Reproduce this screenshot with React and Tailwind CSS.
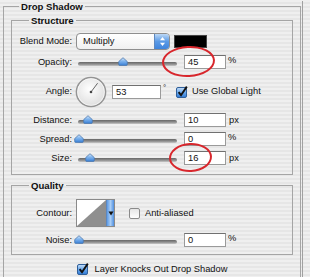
import React from "react";

function Label({ children }) {
  return <div className="w-[60px] shrink-0 text-right">{children}</div>;
}

function Field({ value, w = "w-[42px]" }) {
  return (
    <div className={`h-[14px] ${w} shrink-0 border border-[#9a9a9a] border-t-[#707070] bg-white pl-[3px] leading-[12px]`}>
      {value}
    </div>
  );
}

function Thumb() {
  return (
    <svg width="10" height="9" viewBox="0 0 10 9">
      <defs>
        <linearGradient id="thumbg" x1="0" y1="0" x2="0" y2="1">
          <stop offset="0" stopColor="#d6e8fb" />
          <stop offset="0.45" stopColor="#7fb4ee" />
          <stop offset="1" stopColor="#3a80d6" />
        </linearGradient>
      </defs>
      <path d="M0.7 4.6 L5 0.7 L9.3 4.6 L9.3 7.6 Q9.3 8.4 8.5 8.4 L1.5 8.4 Q0.7 8.4 0.7 7.6 Z" fill="url(#thumbg)" stroke="#4d79ae" strokeWidth="0.8" />
    </svg>
  );
}

function Slider({ pos }) {
  return (
    <div className="relative ml-[3px] h-[14px] w-[103px] shrink-0">
      <div className="ml-[3px] mt-[7px] h-[4px] w-[99px] rounded-full bg-[linear-gradient(#666666,#8f8f8f_55%,#c8c8c8)]" />
      <div className="absolute top-[2px]" style={{ left: pos - 5 }}>
        <Thumb />
      </div>
    </div>
  );
}

function CheckOn() {
  return (
    <svg width="12" height="12" viewBox="0 0 12 12" className="shrink-0 overflow-visible">
      <defs>
        <linearGradient id="cbg" x1="0" y1="0" x2="0" y2="1">
          <stop offset="0" stopColor="#c9e0f8" />
          <stop offset="0.5" stopColor="#68a7ec" />
          <stop offset="1" stopColor="#2f79d4" />
        </linearGradient>
      </defs>
      <rect x="0.5" y="1.5" width="10" height="10" rx="1.5" fill="url(#cbg)" stroke="#2f5f9a" />
      <path d="M2.6 6.2 L5 9.2 L10.8 0.6" fill="none" stroke="#111" strokeWidth="1.9" />
    </svg>
  );
}

function CheckOff() {
  return (
    <svg width="11" height="11" viewBox="0 0 11 11" className="shrink-0">
      <defs>
        <linearGradient id="cbo" x1="0" y1="0" x2="0" y2="1">
          <stop offset="0" stopColor="#e4e4e4" />
          <stop offset="1" stopColor="#ffffff" />
        </linearGradient>
      </defs>
      <rect x="0.5" y="0.5" width="10" height="10" rx="1.5" fill="url(#cbo)" stroke="#8a8a8a" />
    </svg>
  );
}

function Dial() {
  return (
    <svg width="32" height="32" viewBox="0 0 32 32" className="shrink-0">
      <defs>
        <radialGradient id="dialg" cx="0.45" cy="0.4" r="0.6">
          <stop offset="0" stopColor="#ffffff" />
          <stop offset="1" stopColor="#dedede" />
        </radialGradient>
      </defs>
      <circle cx="16" cy="16" r="14.6" fill="url(#dialg)" stroke="#949494" strokeWidth="1.5" />
      <circle cx="16" cy="16" r="13.4" fill="none" stroke="#ffffff" strokeWidth="0.6" />
      <line x1="16" y1="16" x2="22.6" y2="7.2" stroke="#555" strokeWidth="0.9" />
      <circle cx="16" cy="16" r="1.3" fill="#444" />
    </svg>
  );
}

function Dropdown() {
  return (
    <div className="ml-[4px] flex h-[17px] w-[94px] shrink-0 overflow-hidden rounded-[4px] border border-[#8e8e8e] bg-[linear-gradient(#ffffff,#f0f0f0)]">
      <div className="flex-1 pl-[6px] leading-[15px]">Multiply</div>
      <div className="flex w-[15px] items-center justify-center border-l border-[#5d88c0] bg-[linear-gradient(#bcd8f6,#5a9ae6_50%,#3f84dc)]">
        <svg width="7" height="11" viewBox="0 0 7 11">
          <path d="M3.5 1 L6 4.2 L1 4.2 Z" fill="#fff" />
          <path d="M3.5 10 L6 6.8 L1 6.8 Z" fill="#fff" />
        </svg>
      </div>
    </div>
  );
}

function Contour() {
  return (
    <div className="ml-[4px] flex h-[28px] shrink-0 border border-[#8a8a8a]">
      <svg width="29" height="26" viewBox="0 0 29 26">
        <rect width="29" height="26" fill="#fff" />
        <polygon points="0,26 29,0 29,26" fill="#8f8f8f" />
      </svg>
      <div className="flex w-[8px] items-center justify-center border-l border-[#5d88c0] bg-[linear-gradient(90deg,#5d9be6,#a9cdf5,#4f8fe0)]">
        <svg width="6" height="5" viewBox="0 0 6 5">
          <path d="M0.5 0.5 L5.5 0.5 L3 4.5 Z" fill="#111" />
        </svg>
      </div>
    </div>
  );
}

export default function App() {
  return (
    <div className="relative flex h-[277px] w-[310px] overflow-hidden bg-[image:repeating-linear-gradient(180deg,#efefef_0px,#efefef_2px,#e6e6e6_2px,#e6e6e6_4px)] pt-[1px] font-['Liberation_Sans',Arial,sans-serif] text-[9.3px] leading-[11px] text-[#111]">
      <fieldset className="ml-[3px] w-[298px] shrink-0 border border-b-0 border-[#a5a5a5]">
        <legend className="ml-[15px] px-[2px] text-[9.6px] font-bold leading-[11px]">Drop Shadow</legend>

        <fieldset className="mx-[7px] mt-[3px] border border-[#a5a5a5] pb-[9px]">
          <legend className="ml-[17px] px-[2px] text-[9.6px] font-bold leading-[11px]">Structure</legend>

          <div className="mt-[6px] flex h-[18px] items-center">
            <Label>Blend Mode:</Label>
            <Dropdown />
            <div className="ml-[4px] h-[13px] w-[33px] shrink-0 border border-[#444] bg-black" />
          </div>

          <div className="mt-[5px] flex h-[14px] items-center">
            <Label>Opacity:</Label>
            <Slider pos={48} />
            <div className="ml-[6px]"><Field value="45" /></div>
            <span className="ml-[2px] self-start">%</span>
          </div>

          <div className="mt-[7px] flex h-[31px] items-center">
            <Label>Angle:</Label>
            <div className="ml-[3px]"><Dial /></div>
            <div className="ml-[5px]"><Field value="53" w="w-[49px]" /></div>
            <span className="ml-[2px] w-[8px] self-start pt-[6px] text-[8px]">°</span>
            <div className="ml-[5px]"><CheckOn /></div>
            <span className="ml-[4px]">Use Global Light</span>
          </div>

          <div className="mt-[6px] flex h-[14px] items-center">
            <Label>Distance:</Label>
            <Slider pos={13} />
            <div className="ml-[6px]"><Field value="10" /></div>
            <span className="ml-[3px]">px</span>
          </div>

          <div className="mt-[5px] flex h-[14px] items-center">
            <Label>Spread:</Label>
            <Slider pos={4} />
            <div className="ml-[6px]"><Field value="0" /></div>
            <span className="ml-[2px] self-start">%</span>
          </div>

          <div className="mt-[5px] flex h-[14px] items-center">
            <Label>Size:</Label>
            <Slider pos={15} />
            <div className="ml-[6px]"><Field value="16" /></div>
            <span className="ml-[3px]">px</span>
          </div>
        </fieldset>

        <fieldset className="mx-[7px] mt-[5px] border border-[#a5a5a5] pb-[7px]">
          <legend className="ml-[17px] px-[2px] text-[9.6px] font-bold leading-[11px]">Quality</legend>

          <div className="mt-[8px] flex h-[28px] items-center">
            <Label>Contour:</Label>
            <Contour />
            <div className="ml-[14px]"><CheckOff /></div>
            <span className="ml-[5px]">Anti-aliased</span>
          </div>

          <div className="mt-[6px] flex h-[14px] items-center">
            <Label>Noise:</Label>
            <Slider pos={4} />
            <div className="ml-[6px]"><Field value="0" /></div>
            <span className="ml-[2px] self-start">%</span>
          </div>
        </fieldset>

        <div className="mt-[8px] flex h-[12px] items-center justify-center">
          <CheckOn />
          <span className="ml-[6px]">Layer Knocks Out Drop Shadow</span>
        </div>
      </fieldset>
      <div className="ml-[1px] w-px shrink-0 bg-[#a0a0a0]" />

      <div className="absolute left-[162px] top-[46px] h-[31px] w-[53px] -rotate-3 rounded-[50%] border-2 border-[#d8262c]" />
      <div className="absolute left-[169px] top-[143px] h-[29px] w-[43px] -rotate-3 rounded-[50%] border-2 border-[#d8262c]" />
    </div>
  );
}
